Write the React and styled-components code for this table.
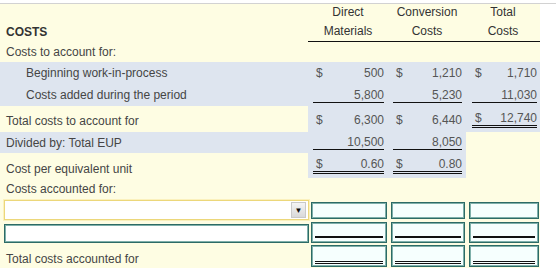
import React from "react"
import styled, { createGlobalStyle, css } from "styled-components"

const YELLOW = "#fefde3"
const BLUE = "#dee5ef"
const COLS = "308px 80px 78px 74px"

const Global = createGlobalStyle`
  body {
    margin: 0;
    background: #fff;
    font-family: "Liberation Sans", Arial, sans-serif;
    font-size: 12px;
  }
`

const Page = styled.div`
  padding-top: 3px;
`

const Frame = styled.div`
  border-top: 1px solid #d2d2d2;
`

const Panel = styled.div`
  width: 540px;
  background: ${YELLOW};
`

const Row = styled.div`
  display: grid;
  grid-template-columns: ${COLS};
  height: ${(p) => p.$h}px;
`

const Label = styled.div`
  display: flex;
  align-items: ${(p) => (p.$end ? "flex-end" : "center")};
  padding: ${(p) => p.$drop || 0}px 0 ${(p) => (p.$end ? 2 : 0)}px
    ${(p) => (p.$indent ? 26 : 6)}px;
  background: ${(p) => (p.$blue ? BLUE : "transparent")};
  color: #454545;
  line-height: 14px;
  white-space: nowrap;
  ${(p) =>
    p.$bold &&
    css`
      font-weight: bold;
      color: #333;
    `}
`

const Head = styled.div`
  display: flex;
  align-items: center;
  justify-content: center;
  padding-bottom: ${(p) => (p.$ruled ? 0 : 2)}px;
  color: #333;
  border-bottom: ${(p) => (p.$ruled ? "1px solid #111" : "none")};
`

const NumCell = styled.div`
  display: flex;
  align-items: center;
  padding: ${(p) => p.$drop || 0}px ${(p) => (p.$wide ? 3 : 4)}px 0
    ${(p) => (p.$wide ? 6 : 5)}px;
  background: ${(p) => (p.$blue ? BLUE : "transparent")};
`

const Amount = styled.div`
  flex: 1;
  display: flex;
  justify-content: space-between;
  padding-left: 3px;
  line-height: 14px;
  color: #555;
  border-bottom: ${(p) =>
    p.$rule === "double"
      ? "3px double #111"
      : p.$rule === "single"
      ? "1px solid #111"
      : "none"};
`

const SelectBox = styled.div`
  display: flex;
  justify-content: flex-end;
  align-items: center;
  width: 303px;
  height: 18px;
  margin-left: 4px;
  background: #fff;
  border: 1px solid #ecd77a;
  box-shadow: 0 0 0 1px #fbf1bd;
`

const ArrowBtn = styled.div`
  display: flex;
  align-items: center;
  justify-content: center;
  width: 13px;
  height: 14px;
  margin-right: 2px;
  background: linear-gradient(#f4f4f4, #d9d9d9);
  border: 1px solid #c9c9c9;
  color: #111;
  font-size: 8px;
`

const TextBox = styled.div`
  width: 303px;
  height: 17px;
  margin: 3px 0 0 4px;
  background: #fff;
  border: 1px solid #2d6b66;
  box-shadow: inset 0 0 0 1px #7fb0aa;
`

const InputCell = styled.div`
  display: flex;
  align-items: center;
  padding: 0 1px 0 3px;
`

const InputBox = styled.div`
  flex: 1;
  display: flex;
  align-items: flex-end;
  height: ${(p) => p.$h}px;
  padding: 0 3px ${(p) => (p.$rule === "double" ? 2 : 4)}px;
  box-sizing: border-box;
  background: #f6fffe;
  border: 1px solid #2d6b66;
  box-shadow: inset 0 0 0 1px #7fb0aa;
`

const Rule = styled.div`
  flex: 1;
  border-bottom: ${(p) =>
    p.$rule === "double" ? "3px double #111" : "2px solid #111"};
`

const money = (sign, value, rule) => (
  <Amount $rule={rule}>
    <span>{sign ? "$" : ""}</span>
    <span>{value}</span>
  </Amount>
)

const inputs = (h, rule) =>
  [0, 1, 2].map((i) => (
    <InputCell key={i}>
      <InputBox $h={h} $rule={rule}>
        {rule && <Rule $rule={rule} />}
      </InputBox>
    </InputCell>
  ))

export default function App() {
  return (
    <Page>
      <Global />
      <Frame>
        <Panel>
          <Row $h={17}>
            <Label />
            <Head>Direct</Head>
            <Head>Conversion</Head>
            <Head>Total</Head>
          </Row>
          <Row $h={21}>
            <Label $bold>COSTS</Label>
            <Head $ruled>Materials</Head>
            <Head $ruled>Costs</Head>
            <Head $ruled>Costs</Head>
          </Row>
          <Row $h={20}>
            <Label>Costs to account for:</Label>
          </Row>
          <Row $h={22}>
            <Label $blue $indent>Beginning work-in-process</Label>
            <NumCell $blue>{money(true, "500")}</NumCell>
            <NumCell $blue>{money(true, "1,210")}</NumCell>
            <NumCell $blue $wide>{money(true, "1,710")}</NumCell>
          </Row>
          <Row $h={22}>
            <Label $blue $indent>Costs added during the period</Label>
            <NumCell $blue>{money(false, "5,800", "single")}</NumCell>
            <NumCell $blue>{money(false, "5,230", "single")}</NumCell>
            <NumCell $blue $wide>{money(false, "11,030", "single")}</NumCell>
          </Row>
          <Row $h={26}>
            <Label $drop={4}>Total costs to account for</Label>
            <NumCell $blue $drop={2}>{money(true, "6,300")}</NumCell>
            <NumCell $blue $drop={2}>{money(true, "6,440")}</NumCell>
            <NumCell $blue $wide>{money(true, "12,740", "double")}</NumCell>
          </Row>
          <Row $h={21}>
            <Label $blue>Divided by: Total EUP</Label>
            <NumCell $blue>{money(false, "10,500", "single")}</NumCell>
            <NumCell $blue>{money(false, "8,050", "single")}</NumCell>
            <NumCell $wide />
          </Row>
          <Row $h={25}>
            <Label $end>Cost per equivalent unit</Label>
            <NumCell $blue>{money(true, "0.60", "double")}</NumCell>
            <NumCell $blue>{money(true, "0.80", "double")}</NumCell>
            <NumCell $wide />
          </Row>
          <Row $h={22}>
            <Label>Costs accounted for:</Label>
          </Row>
          <Row $h={21}>
            <div>
              <SelectBox>
                <ArrowBtn>▼</ArrowBtn>
              </SelectBox>
            </div>
            {inputs(17)}
          </Row>
          <Row $h={23}>
            <div>
              <TextBox />
            </div>
            {inputs(21, "single")}
          </Row>
          <Row $h={24}>
            <Label $end>Total costs accounted for</Label>
            {inputs(22, "double")}
          </Row>
        </Panel>
      </Frame>
    </Page>
  )
}
